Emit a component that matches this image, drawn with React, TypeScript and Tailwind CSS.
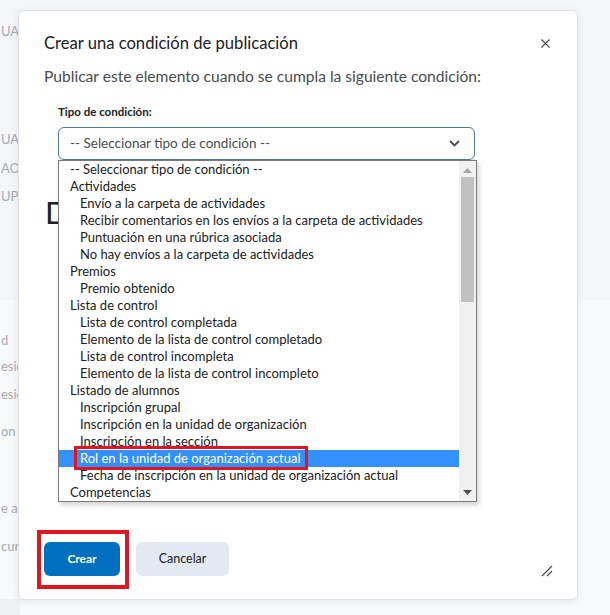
import { X } from "lucide-react";

type Opt = { label: string; level: 0 | 1; selected?: boolean };

const options: Opt[] = [
  { label: "-- Seleccionar tipo de condición --", level: 0 },
  { label: "Actividades", level: 0 },
  { label: "Envío a la carpeta de actividades", level: 1 },
  { label: "Recibir comentarios en los envíos a la carpeta de actividades", level: 1 },
  { label: "Puntuación en una rúbrica asociada", level: 1 },
  { label: "No hay envíos a la carpeta de actividades", level: 1 },
  { label: "Premios", level: 0 },
  { label: "Premio obtenido", level: 1 },
  { label: "Lista de control", level: 0 },
  { label: "Lista de control completada", level: 1 },
  { label: "Elemento de la lista de control completado", level: 1 },
  { label: "Lista de control incompleta", level: 1 },
  { label: "Elemento de la lista de control incompleto", level: 1 },
  { label: "Listado de alumnos", level: 0 },
  { label: "Inscripción grupal", level: 1 },
  { label: "Inscripción en la unidad de organización", level: 1 },
  { label: "Inscripción en la sección", level: 1 },
  { label: "Rol en la unidad de organización actual", level: 1, selected: true },
  { label: "Fecha de inscripción en la unidad de organización actual", level: 1 },
  { label: "Competencias", level: 0 },
];

// faded bits of the page behind the dialog
const behind = [
  { t: "UAN", y: 23 },
  { t: "UAC", y: 131 },
  { t: "AO", y: 160 },
  { t: "UPI", y: 188 },
  { t: "d", y: 332 },
  { t: "esió", y: 358 },
  { t: "esió", y: 386 },
  { t: "on d", y: 423 },
  { t: "e al", y: 500 },
  { t: "cur", y: 538 },
];

export default function App() {
  return (
    <div
      className="relative w-[610px] h-[615px] overflow-hidden bg-[#f8f9fb]"
      style={{ fontFamily: "Lato, 'Open Sans', sans-serif" }}
    >
      {/* page behind */}
      <div className="absolute inset-x-0 top-0 h-[300px] bg-[#f3f5f9]" />
      <div className="absolute left-0 bottom-0 w-[20px] h-[16px] bg-[#eef0f3]" />
      {behind.map((b, i) => (
        <span
          key={i}
          className="absolute left-[1px] text-[13px] leading-[16px] text-[#a7abb0]"
          style={{ top: b.y }}
        >
          {b.t}
        </span>
      ))}

      {/* dialog */}
      <div className="absolute left-[18px] top-[10px] w-[560px] h-[590px] flex flex-col bg-white rounded-[6px] border border-[#dfe3e8] shadow-[0_2px_8px_rgba(0,0,0,0.08)]">
        <div className="flex items-center justify-between pl-[25px] pr-[24px] pt-[20px]">
          <h1 className="text-[16.6px] leading-[24px] text-[#202122]">Crear una condición de publicación</h1>
          <X size={15} strokeWidth={1.8} className="text-[#494c4e]" />
        </div>
        <p className="pl-[25px] mt-[10px] text-[15.6px] leading-[22px] text-[#494c4e]">
          Publicar este elemento cuando se cumpla la siguiente condición:
        </p>

        <div className="relative pl-[39px] mt-[17px]">
          <label className="block text-[11.5px] leading-[16px] font-bold text-[#202122]">Tipo de condición:</label>
          <div className="mt-[7px] w-[417px] h-[33px] flex items-center justify-between pl-[11px] pr-[14px] rounded-[6px] border border-[#4d7a9c] text-[13.5px] text-[#494c4e]">
            <span>-- Seleccionar tipo de condición --</span>
            <svg width="11" height="7" viewBox="0 0 11 7" fill="none" stroke="#494c4e" strokeWidth="1.8">
              <path d="M1 1l4.5 4.5L10 1" />
            </svg>
          </div>
          <div className="mt-[35px] ml-[-13px] text-[31px] leading-[34px] text-[#202122]">D</div>

          {/* open native list */}
          <div className="absolute left-[39px] top-[56px] w-[419px] h-[342px] flex bg-white border border-[#7a7a7a] shadow-[2px_3px_5px_rgba(0,0,0,0.18)]">
            <div className="flex-1">
              {options.map((o, i) => (
                <div
                  key={i}
                  className={`relative h-[17px] text-[13px] leading-[17px] whitespace-nowrap ${
                    o.level ? "pl-[21px]" : "pl-[11px]"
                  } ${o.selected ? "bg-[#3390ff] text-white" : "text-[#202122]"}`}
                >
                  {o.label}
                  {o.selected && (
                    <div className="absolute left-[15px] top-[-4px] w-[234px] h-[24px] border-[3px] border-[#e0151f]" />
                  )}
                </div>
              ))}
            </div>
            <div className="w-[17px] flex flex-col items-center bg-[#f0f0f0]">
              <svg width="9" height="5" viewBox="0 0 9 5" className="mt-[7px]">
                <path d="M0 5L4.5 0L9 5z" fill="#a3a3a3" />
              </svg>
              <div className="mt-[4px] w-[13px] h-[125px] bg-[#c1c1c1]" />
              <svg width="9" height="5" viewBox="0 0 9 5" className="mt-auto mb-[6px]">
                <path d="M0 0L4.5 5L9 0z" fill="#505050" />
              </svg>
            </div>
          </div>
        </div>

        <div className="mt-auto flex items-end justify-between pl-[25px] pr-[24px] pb-[23px]">
          <div className="flex gap-[16px]">
            <div className="relative">
              <button className="w-[76px] h-[34px] rounded-[6px] bg-[#006fbf] text-white text-[12px] font-bold">
                Crear
              </button>
              <div className="absolute left-[-7px] top-[-12px] w-[92px] h-[59px] border-[4px] border-[#e0151f]" />
            </div>
            <button className="w-[93px] h-[34px] rounded-[6px] bg-[#e3e9f1] text-[#202122] text-[12.5px]">
              Cancelar
            </button>
          </div>
          <svg width="12" height="12" viewBox="0 0 12 12" stroke="#494c4e" strokeWidth="1.2" className="mb-[-1px]">
            <path d="M1 11L11 1M6 11L11 6" />
          </svg>
        </div>
      </div>
    </div>
  );
}
